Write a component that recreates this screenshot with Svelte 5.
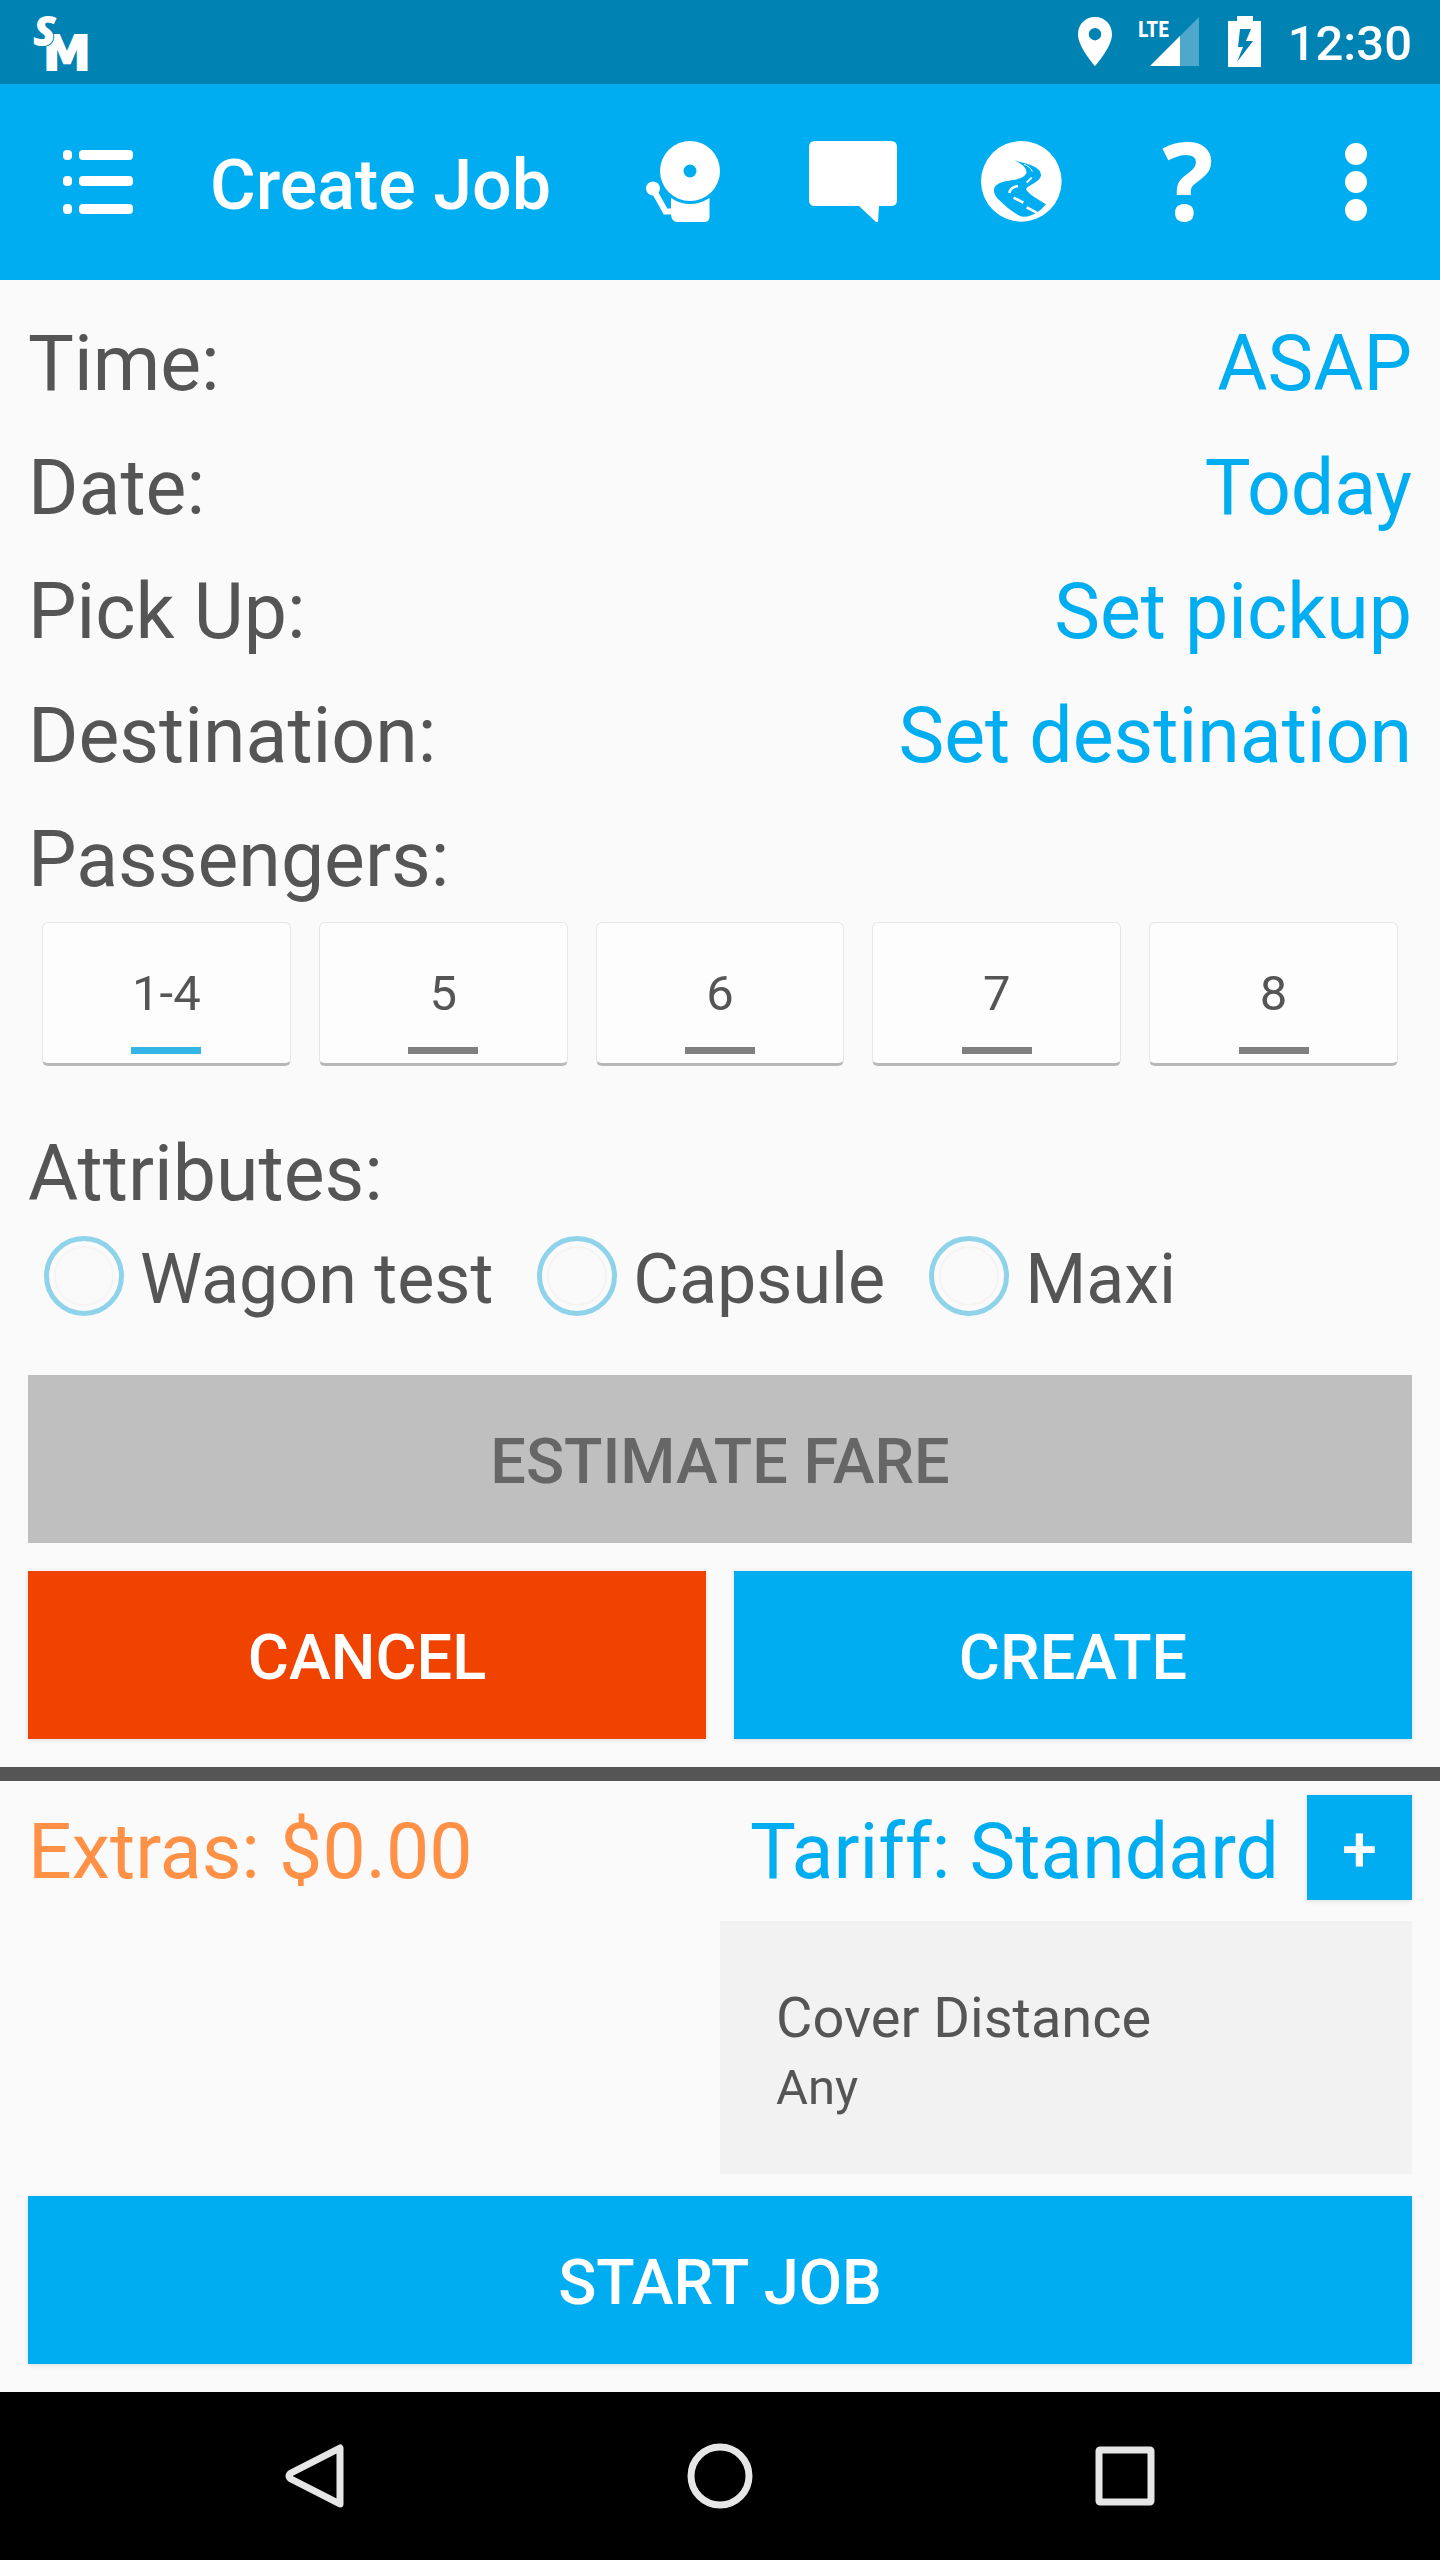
<script>
  // Job details
  const details = [
    { label: "Time:", value: "ASAP" },
    { label: "Date:", value: "Today" },
    { label: "Pick Up:", value: "Set pickup" },
    { label: "Destination:", value: "Set destination" }
  ];

  const seats = ["1-4", "5", "6", "7", "8"];
  const attributes = ["Wagon test", "Capsule", "Maxi"];

  // Variables
  let passengers = "1-4";
  let selected = [];
  let extras = 0;
</script>

<div class="screen">
  <div class="status">
    <svg class="logo" width="72" height="84" viewBox="0 0 72 84" aria-label="SM">
      <text class="logo-m" x="15" y="70">M</text>
      <text class="logo-s" x="5" y="46">S</text>
    </svg>
    <div class="indicators">
      <svg width="36" height="50" viewBox="0 0 36 50">
        <path
          fill="#fff"
          fill-rule="evenodd"
          d="M18 0C8 0 1 7.600 1 17.400C1 30 18 49 18 49S35 30 35 17.400C35 7.600 28 0 18 0ZM18 11a6.200 6.200 0 1 1 0 12.400a6.200 6.200 0 1 1 0 -12.400Z"
        />
      </svg>
      <svg class="signal" width="62" height="70" viewBox="0 -10 62 70">
        <path fill="#fff" fill-opacity="0.3" d="M61 0V49H12Z" />
        <path fill="#fff" d="M42 19V49H12Z" />
        <text x="0" y="20">LTE</text>
      </svg>
      <svg class="battery" width="34" height="52" viewBox="0 0 34 52">
        <path
          fill="#fff"
          fill-rule="evenodd"
          d="M9 0H25V5H33V51H0V5H9ZM12 13L10 31H15L9 46L25 25H18L23 13Z"
        />
      </svg>
      <span class="clock">12:30</span>
    </div>
  </div>

  <header>
    <button class="menu" aria-label="Menu">
      <svg width="72" height="64" viewBox="0 0 72 64" fill="#fff">
        <rect x="1" y="0" width="9" height="10" rx="4" />
        <rect x="17" y="0" width="54" height="10" rx="4" />
        <rect x="1" y="26" width="9" height="10" rx="4" />
        <rect x="17" y="26" width="54" height="10" rx="4" />
        <rect x="1" y="54" width="9" height="10" rx="4" />
        <rect x="17" y="54" width="54" height="10" rx="4" />
      </svg>
    </button>
    <h1>Create Job</h1>
    <button aria-label="Alerts">
      <svg width="84" height="84" viewBox="0 0 84 84">
        <path
          fill="#fff"
          fill-rule="evenodd"
          d="M48 1a30 30 0 1 1 0 60a30 30 0 1 1 0 -60ZM48 24.500a6.500 6.500 0 1 0 0 13a6.500 6.500 0 1 0 0 -13Z"
        />
        <path fill="#fff" d="M29 58Q38 64 48 64T67.500 58V77Q67.500 82 62 82H35Q30 82 29 75Z" />
        <path fill="none" stroke="#fff" stroke-width="6" d="M11 49L23.500 71.500H31" />
        <circle cx="11" cy="48.500" r="7" fill="#fff" />
      </svg>
    </button>
    <button aria-label="Messages">
      <svg width="90" height="84" viewBox="-2 0 90 84">
        <path
          fill="#fff"
          d="M6 1H82Q88 1 88 7V60Q88 66 82 66H70L69 82H67L50 66H6Q0 66 0 60V7Q0 1 6 1Z"
        />
      </svg>
    </button>
    <button aria-label="Trips">
      <svg width="88" height="88" viewBox="-6 0 264 264">
        <circle cx="130" cy="130" r="121" fill="#fff" />
        <path
          fill="#00adf1"
          d="M110 67C132 75 190 82 189 112C188 132 152 140 144 153C150 168 180 184 204 199L190 214L180 221C162 233 142 239 128 235C104 224 80 202 60 183C38 158 46 138 82 130C108 126 136 124 145 106C148 88 128 77 110 67Z"
        />
        <g fill="none" stroke="#fff">
          <path stroke-width="3" d="M138 79Q158 86 163 101" />
          <path stroke-width="6" d="M161 119L146 134" />
          <path stroke-width="8" d="M120 144Q97 148 94 165" />
          <path stroke-width="8" d="M107 179L136 194" />
          <path stroke-width="8" d="M146 208L176 224" />
        </g>
      </svg>
    </button>
    <button class="help" aria-label="Help">?</button>
    <button aria-label="More options">
      <svg width="24" height="78" viewBox="0 0 24 78" fill="#fff">
        <circle cx="12" cy="11" r="11" />
        <circle cx="12" cy="39" r="11" />
        <circle cx="12" cy="67" r="11" />
      </svg>
    </button>
  </header>

  <main>
    {#each details as { label, value }}
      <div class="row">
        <span>{label}</span>
        <button class="link">{value}</button>
      </div>
    {/each}

    <div class="row">Passengers:</div>
    <div class="seats">
      {#each seats as seat}
        <button
          class:on={passengers === seat}
          aria-pressed={passengers === seat}
          on:click={() => (passengers = seat)}
        >
          {seat}
        </button>
      {/each}
    </div>

    <div class="row">Attributes:</div>
    <div class="attributes">
      {#each attributes as attribute}
        <label>
          <input type="checkbox" value={attribute} bind:group={selected} />
          <span>{attribute}</span>
        </label>
      {/each}
    </div>

    <div class="actions">
      <button class="action wide" disabled>ESTIMATE FARE</button>
      <button class="action cancel">CANCEL</button>
      <button class="action">CREATE</button>
    </div>
  </main>

  <section>
    <div class="fare">
      <span class="extras">Extras: ${extras.toFixed(2)}</span>
      <span class="tariff">Tariff: Standard</span>
      <button class="action add" aria-label="Add extra">+</button>
    </div>
    <div class="card">
      <div class="card-title">Cover Distance</div>
      <div>Any</div>
    </div>
    <button class="action start">START JOB</button>
  </section>

  <nav>
    <button aria-label="Back">
      <svg width="66" height="66" viewBox="0 0 66 66">
        <path d="M58 5V61L9 36Q5 33 9 30Z" />
      </svg>
    </button>
    <button aria-label="Home">
      <svg width="66" height="66" viewBox="0 0 66 66">
        <circle cx="33" cy="33" r="29" />
      </svg>
    </button>
    <button aria-label="Recent apps">
      <svg width="66" height="66" viewBox="0 0 66 66">
        <rect x="7" y="7" width="52" height="52" rx="1" />
      </svg>
    </button>
  </nav>
</div>

<style>
  :global(body) {
    background: #fafafa;
  }

  .screen {
    display: flex;
    flex-direction: column;
    min-height: 100vh;
    color: #555;
    font-family: Roboto, "Liberation Sans", sans-serif;
    font-size: 77px;
  }

  button {
    padding: 0;
    border: none;
    background: none;
    color: inherit;
    font: inherit;
    cursor: pointer;
  }

  svg {
    display: block;
  }

  .status {
    display: flex;
    justify-content: space-between;
    align-items: center;
    height: 84px;
    padding: 0 28px;
    background: #0083b3;
    color: #fff;
  }

  .logo text {
    fill: #fff;
    font-weight: 800;
  }

  .logo .logo-m {
    font-family: "DejaVu Sans", sans-serif;
    font-size: 48px;
    stroke: #fff;
    stroke-width: 2px;
  }

  .logo .logo-s {
    font-family: "Open Sans", sans-serif;
    font-size: 42px;
    font-style: italic;
    stroke: #0083b3;
    stroke-width: 2px;
    paint-order: stroke;
  }

  .indicators {
    display: flex;
    align-items: center;
  }

  .signal {
    margin: 0 28px 0 25px;
  }

  .signal text {
    fill: #fff;
    font-family: "Roboto Condensed", Roboto, sans-serif;
    font-size: 22px;
    font-weight: 700;
  }

  .clock {
    margin-left: 26px;
    padding-top: 4px;
    font-size: 49px;
    font-weight: 500;
    line-height: 80px;
  }

  header {
    display: flex;
    align-items: center;
    height: 196px;
    background: #00adf1;
    color: #fff;
  }

  header button {
    display: flex;
    justify-content: center;
    width: 168px;
  }

  header .menu {
    width: 196px;
  }

  h1 {
    flex: 1;
    margin: 0 0 0 14px;
    padding-top: 6px;
    font-size: 70px;
    font-weight: 500;
    line-height: 84px;
    white-space: nowrap;
  }

  header .help {
    padding-bottom: 4px;
    font-family: "Open Sans", sans-serif;
    font-size: 108px;
    font-weight: 700;
    line-height: 112px;
  }

  main {
    padding: 22px 28px 28px;
  }

  .row {
    display: flex;
    justify-content: space-between;
    line-height: 124px;
  }

  .link {
    color: #00adf1;
  }

  .seats {
    display: flex;
    gap: 28px;
    margin: 0 14px 46px;
  }

  .seats button {
    display: flex;
    flex: 1;
    flex-direction: column;
    align-items: center;
    justify-content: flex-end;
    gap: 18px;
    height: 144px;
    padding-bottom: 9px;
    border: 1px solid #e6e6e6;
    border-bottom: 3px solid #b8b8b8;
    border-radius: 6px;
    background: #fdfdfd;
    font-size: 49px;
    line-height: 70px;
  }

  .seats button::after {
    content: "";
    width: 70px;
    height: 7px;
    background: #808080;
  }

  .seats button.on::after {
    background: #33b5e5;
  }

  .attributes {
    display: flex;
    gap: 44px;
    margin: 0 16px 59px;
  }

  .attributes label {
    display: flex;
    align-items: center;
    gap: 16px;
    font-size: 70px;
    line-height: 74px;
  }

  .attributes span {
    padding-top: 6px;
  }

  .attributes input {
    appearance: none;
    width: 80px;
    height: 80px;
    margin: 0;
    border: 5px solid #8fd3ea;
    border-radius: 50%;
    box-shadow: inset 0 0 0 5px #fafafa, inset 0 0 0 7px #f6f3f3;
  }

  .attributes input:checked {
    background: #33b5e5;
  }

  .actions {
    display: grid;
    grid-template-columns: 1fr 1fr;
    gap: 28px;
  }

  .action {
    height: 168px;
    padding-top: 4px;
    background: #00adf1;
    box-shadow: 0 1px 5px rgba(0, 0, 0, 0.12);
    color: #fff;
    font-size: 63px;
    font-weight: 500;
  }

  .action:disabled {
    background: #bfbfbf;
    box-shadow: none;
    color: #666;
  }

  .wide {
    grid-column: 1 / -1;
  }

  .cancel {
    background: #f04300;
  }

  section {
    display: flex;
    flex-direction: column;
    padding: 14px 28px 28px;
    border-top: 14px solid #555;
  }

  .fare {
    display: flex;
    align-items: center;
    gap: 28px;
    margin-bottom: 21px;
    line-height: 95px;
  }

  .extras,
  .tariff {
    padding-top: 10px;
  }

  .extras {
    flex: 1;
    color: #ff9147;
  }

  .tariff {
    color: #00adf1;
  }

  .add {
    width: 105px;
    height: 105px;
  }

  .card {
    align-self: flex-end;
    box-sizing: border-box;
    width: 50%;
    padding: 62px 56px 51px;
    background: #f2f2f2;
    font-size: 49px;
    line-height: 70px;
  }

  .card-title {
    font-size: 56px;
  }

  .start {
    margin-top: 22px;
  }

  nav {
    display: flex;
    justify-content: center;
    align-items: center;
    gap: 339px;
    height: 168px;
    margin-top: auto;
    background: #000;
  }

  nav svg {
    fill: none;
    stroke: #e6e6e6;
    stroke-width: 7px;
    stroke-linejoin: round;
  }
</style>
